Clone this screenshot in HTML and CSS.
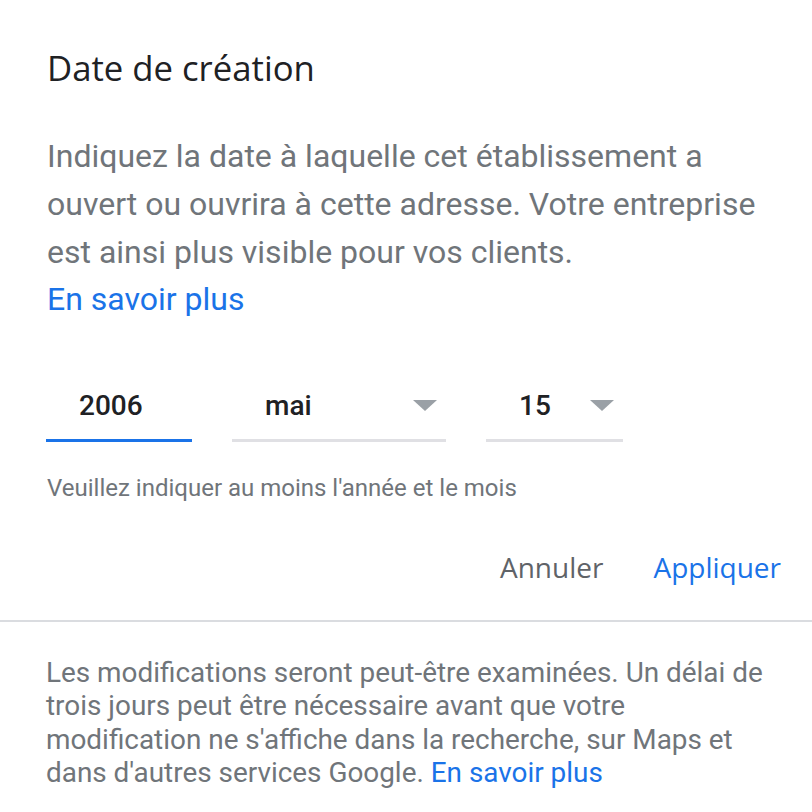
FILE: index.html
```html
<!DOCTYPE html>
<html lang="fr">
<head>
<meta charset="utf-8">
<link rel="stylesheet" href="styles.css">
</head>
<body>
<div class="dialog">
  <div class="main">
    <h1 class="title">Date de création</h1>
    <p class="desc">Indiquez la date à laquelle cet établissement a ouvert ou ouvrira à cette adresse. Votre entreprise est ainsi plus visible pour vos clients.<br><a class="link">En savoir plus</a></p>
    <div class="fields">
      <div class="field year"><span class="val">2006</span></div>
      <div class="field month"><span class="val">mai</span><span class="arrow"></span></div>
      <div class="field day"><span class="val">15</span><span class="arrow"></span></div>
    </div>
    <p class="hint">Veuillez indiquer au moins l'année et le mois</p>
    <div class="actions">
      <span class="btn cancel">Annuler</span>
      <span class="btn apply">Appliquer</span>
    </div>
  </div>
  <div class="footer">
    <p class="note">Les modifications seront peut-être examinées. Un délai de trois jours peut être nécessaire avant que votre modification ne s'affiche dans la recherche, sur Maps et dans d'autres services Google. <a class="link">En savoir plus</a></p>
  </div>
</div>
</body>
</html>
```
FILE: styles.css
```css
html, body {
  margin: 0;
  padding: 0;
  background: #ffffff;
}
.dialog {
  width: 812px;
  height: 812px;
  background: #ffffff;
  font-family: Roboto, "Liberation Sans", sans-serif;
  overflow: hidden;
}
.main {
  padding: 0 31px 0 47px;
  border-bottom: 2px solid #dadce0;
}
.title {
  margin: 0;
  padding-top: 47px;
  font-family: "Open Sans", Roboto, sans-serif;
  font-weight: 400;
  font-size: 34.7px;
  line-height: 42px;
  color: #202124;
}
.desc {
  margin: 44px -14px 0 0;
  font-size: 32px;
  line-height: 47.8px;
  color: #70757a;
}
.link {
  color: #1a73e8;
  text-decoration: none;
}
.fields {
  display: flex;
  margin-top: 60px;
  margin-left: -1px;
  gap: 40px;
}
.field {
  display: flex;
  align-items: center;
  justify-content: space-between;
  height: 58px;
  padding: 0 9px 12px 33px;
  box-sizing: border-box;
  border-bottom: 3px solid #e0e0e4;
}
.field.year { width: 146px; border-bottom-color: #1a73e8; }
.field.month { width: 214px; }
.field.day { width: 137px; }
.val {
  font-size: 28px;
  font-weight: 500;
  color: #202124;
}
.arrow {
  width: 0;
  height: 0;
  border-left: 12px solid transparent;
  border-right: 12px solid transparent;
  border-top: 11px solid #9aa0a6;
}
.hint {
  margin: 31px 0 0;
  font-size: 24px;
  line-height: 30px;
  color: #70757a;
}
.actions {
  display: flex;
  justify-content: flex-end;
  gap: 50px;
  padding: 47px 0 36px;
}
.btn {
  font-family: "Open Sans", Roboto, sans-serif;
  font-size: 28px;
  font-weight: 500;
  line-height: 34px;
}
.cancel { color: #5f6368; }
.apply { color: #1a73e8; }
.footer {
  padding: 34px 30px 0 46px;
}
.note {
  margin: 0;
  font-size: 27.9px;
  line-height: 33.3px;
  color: #70757a;
}
```
